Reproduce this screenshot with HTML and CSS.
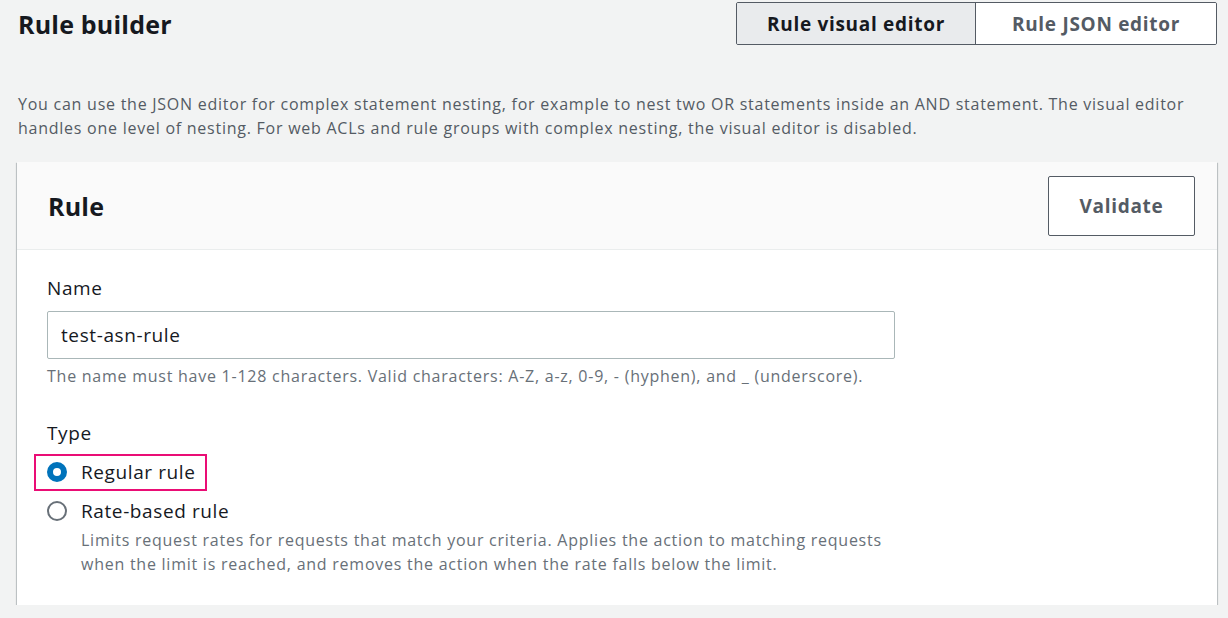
FILE: index.html
```html
<!DOCTYPE html>
<html lang="en">
<head>
    <meta charset="UTF-8">
    <meta name="viewport" content="width=device-width, initial-scale=1.0">
    <title>Rule builder</title>
    <link rel="stylesheet" href="styles.css">
</head>
<body>
    <div class="top-bar">
        <h1 class="page-title">Rule builder</h1>
        <div class="segmented">
            <button class="segment active">Rule visual editor</button>
            <button class="segment">Rule JSON editor</button>
        </div>
    </div>

    <p class="intro">You can use the JSON editor for complex statement nesting, for example to nest two OR statements inside an AND statement. The visual editor handles one level of nesting. For web ACLs and rule groups with complex nesting, the visual editor is disabled.</p>

    <div class="card">
        <div class="card-header">
            <h2 class="card-title">Rule</h2>
            <button class="btn">Validate</button>
        </div>
        <div class="card-body">
            <label class="field-label" for="ruleName">Name</label>
            <input class="text-input" id="ruleName" type="text" value="test-asn-rule">
            <p class="hint">The name must have 1-128 characters. Valid characters: A-Z, a-z, 0-9, - (hyphen), and _ (underscore).</p>

            <div class="field-label type-label">Type</div>
            <div class="radio-row first">
                <span class="highlight">
                    <span class="radio checked"></span>
                    <span class="radio-text">Regular rule</span>
                </span>
            </div>
            <div class="radio-row">
                <span class="radio"></span>
                <span class="radio-text">Rate-based rule</span>
            </div>
            <p class="radio-desc">Limits request rates for requests that match your criteria. Applies the action to matching requests when the limit is reached, and removes the action when the rate falls below the limit.</p>
        </div>
    </div>
</body>
</html>
```

FILE: styles.css
```css
body {
    margin: 0;
    background: #f2f3f3;
    color: #16191f;
    font-family: "Open Sans", "Noto Sans", sans-serif;
}

.top-bar {
    display: flex;
    justify-content: space-between;
    align-items: flex-start;
    padding: 2px 11px 0 18px;
}

.page-title {
    margin: 7px 0 0;
    font-size: 25px;
    line-height: 30px;
    font-weight: 700;
    letter-spacing: 0.2px;
}

.segmented {
    display: flex;
    border: 1px solid #545b64;
    border-radius: 2px;
    overflow: hidden;
}

.segment {
    width: 240px;
    height: 41px;
    border: none;
    background: #fff;
    color: #545b64;
    font-family: inherit;
    font-size: 19px;
    font-weight: 700;
    letter-spacing: 0.7px;
    cursor: pointer;
}

.segment.active {
    width: 239px;
    background: #e9ebed;
    color: #16191f;
    border-right: 1px solid #545b64;
}

.intro {
    margin: 47px 12px 0 18px;
    font-size: 16px;
    line-height: 24px;
    letter-spacing: 0.75px;
    color: #545b64;
}

.card {
    margin: 22px 11px 0 17px;
    background: #fff;
    box-shadow: 0 1px 1px 0 rgba(0, 28, 36, 0.5), 1px 1px 1px 0 rgba(0, 28, 36, 0.15), -1px 1px 1px 0 rgba(0, 28, 36, 0.15);
}

.card-header {
    display: flex;
    justify-content: space-between;
    align-items: center;
    height: 87px;
    padding: 0 22px 0 31px;
    background: #fafafa;
    border-bottom: 1px solid #eaeded;
}

.card-title {
    margin: 0;
    font-size: 25px;
    font-weight: 700;
    letter-spacing: 0.2px;
}

.btn {
    width: 147px;
    height: 60px;
    background: #fff;
    border: 1px solid #545b64;
    border-radius: 2px;
    color: #545b64;
    font-family: inherit;
    font-size: 19px;
    font-weight: 700;
    letter-spacing: 0.7px;
}

.card-body {
    padding: 26px 30px 29px;
}

.field-label {
    display: block;
    font-size: 19px;
    line-height: 24px;
    letter-spacing: 0.6px;
}

.text-input {
    display: block;
    box-sizing: border-box;
    width: 848px;
    height: 48px;
    margin-top: 11px;
    padding: 0 13px;
    border: 1px solid #aab7b8;
    border-radius: 2px;
    font-family: inherit;
    font-size: 19px;
    letter-spacing: 0.6px;
    color: #16191f;
}

.hint {
    margin: 5px 0 0;
    font-size: 16px;
    line-height: 24px;
    letter-spacing: 0.75px;
    color: #687078;
}

.type-label {
    margin-top: 33px;
}

.radio-row {
    display: flex;
    align-items: center;
    gap: 14px;
    margin-top: 8px;
    font-size: 19px;
    line-height: 24px;
    letter-spacing: 0.6px;
}

.radio-row.first {
    margin-top: 9px;
}

.highlight {
    display: inline-flex;
    align-items: center;
    gap: 14px;
    margin-left: -13px;
    padding: 4px 9px 5px 11px;
    border: 2px solid #ea0d75;
}

.radio {
    box-sizing: border-box;
    flex-shrink: 0;
    width: 20px;
    height: 20px;
    border: 2px solid #687078;
    border-radius: 50%;
    background: #fff;
}

.radio.checked {
    border: 6px solid #0073bb;
}

.radio-desc {
    margin: 5px 0 0 34px;
    max-width: 820px;
    font-size: 16px;
    line-height: 24px;
    letter-spacing: 0.75px;
    color: #687078;
}
```
